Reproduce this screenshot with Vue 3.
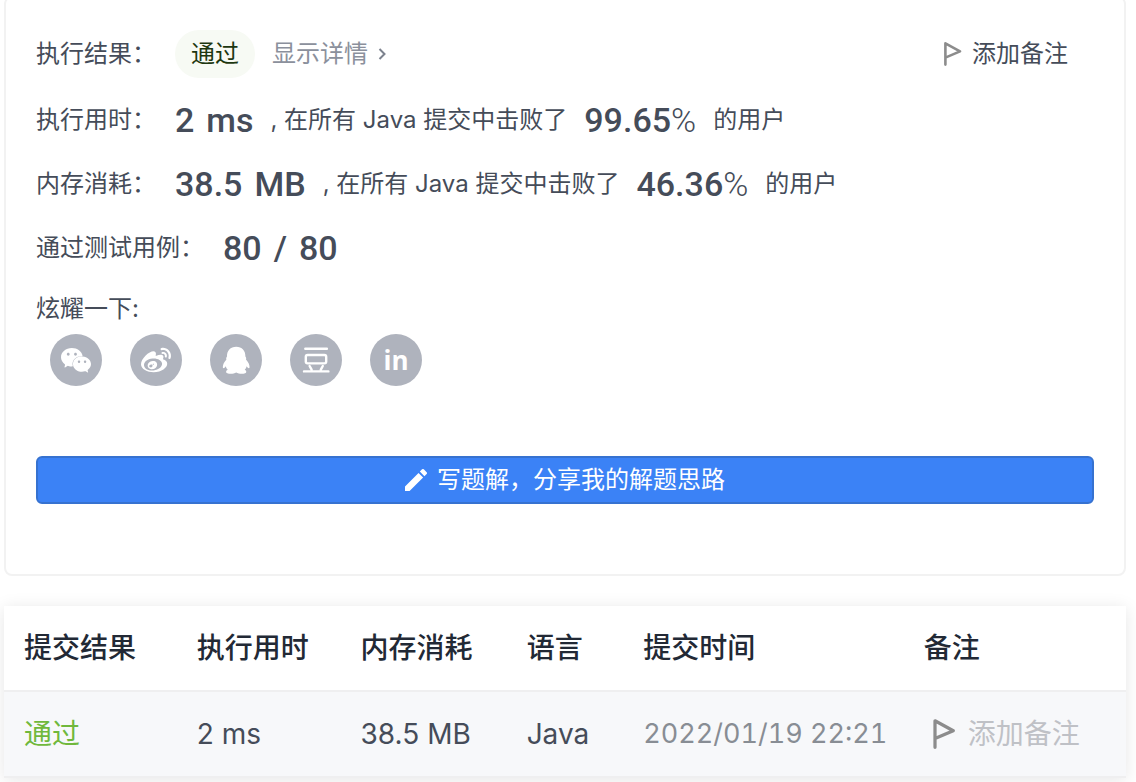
<script setup>
import { ref } from "vue";

const stats = [
  { label: "执行用时：", value: "2", unit: "ms", lang: "Java", percent: "99.65" },
  { label: "内存消耗：", value: "38.5", unit: "MB", lang: "Java", percent: "46.36" },
];

const columns = ["提交结果", "执行用时", "内存消耗", "语言", "提交时间", "备注"];

const submissions = ref([
  { id: 1, status: "通过", time: "2 ms", memory: "38.5 MB", lang: "Java", date: "2022/01/19 22:21" },
]);
</script>

<template>
  <main class="page">
    <section class="card">
      <div class="row row-result">
        <span class="label">执行结果：</span>
        <span class="badge">通过</span>
        <a href="#" class="detail">
          显示详情
          <svg class="chevron" viewBox="0 0 8 12" aria-hidden="true">
            <path d="M1.5 1 6.5 6 1.5 11" />
          </svg>
        </a>
        <button type="button" class="note">
          <svg class="flag" viewBox="0 0 18 24" aria-hidden="true">
            <path d="M1.4 22.6V1.4L16 9.4 1.4 15.6" />
          </svg>
          添加备注
        </button>
      </div>

      <div v-for="stat in stats" :key="stat.label" class="row">
        <span class="label">{{ stat.label }}</span>
        <strong class="value amount"><span>{{ stat.value }}</span><span>{{ stat.unit }}</span></strong>
        <span class="text">, 在所有 {{ stat.lang }} 提交中击败了</span>
        <span class="value"><strong>{{ stat.percent }}</strong><span class="percent">%</span></span>
        <span class="text">的用户</span>
      </div>

      <div class="row">
        <span class="label">通过测试用例：</span>
        <strong class="value amount"><span>80</span><span>/</span><span>80</span></strong>
      </div>

      <p class="show-off">炫耀一下:</p>
      <div class="share">
        <button type="button" class="share-button" aria-label="微信">
          <svg viewBox="0 0 52 52">
            <path transform="translate(11 11.3) scale(1.25)" d="M8.691 2.188C3.891 2.188 0 5.476 0 9.53c0 2.212 1.17 4.203 3.002 5.55a.59.59 0 0 1 .213.665l-.39 1.48c-.019.07-.048.141-.048.213 0 .163.13.295.29.295a.326.326 0 0 0 .167-.054l1.903-1.114a.864.864 0 0 1 .717-.098 10.16 10.16 0 0 0 2.837.403c.276 0 .543-.027.811-.05-.857-2.578.157-4.972 1.932-6.446 1.703-1.415 3.882-1.98 5.853-1.838-.576-3.583-4.196-6.348-8.596-6.348zM5.785 5.991c.642 0 1.162.529 1.162 1.18a1.17 1.17 0 0 1-1.162 1.178A1.17 1.17 0 0 1 4.623 7.17c0-.651.52-1.18 1.162-1.18zm5.813 0c.642 0 1.162.529 1.162 1.18a1.17 1.17 0 0 1-1.162 1.178 1.17 1.17 0 0 1-1.162-1.178c0-.651.52-1.18 1.162-1.18zm5.34 2.867c-1.797-.052-3.746.512-5.28 1.786-1.72 1.428-2.687 3.72-1.78 6.22.942 2.453 3.666 4.229 6.884 4.229.826 0 1.622-.12 2.361-.336a.722.722 0 0 1 .598.082l1.584.926a.272.272 0 0 0 .14.047c.134 0 .24-.111.24-.247 0-.06-.023-.12-.038-.177l-.327-1.233a.582.582 0 0 1-.023-.156.49.49 0 0 1 .201-.398C23.024 18.48 24 16.82 24 14.98c0-3.21-2.931-5.837-6.656-6.088V8.89c-.135-.01-.27-.027-.407-.03zm-2.53 3.274c.535 0 .969.44.969.982a.976.976 0 0 1-.969.983.976.976 0 0 1-.969-.983c0-.542.434-.982.97-.982zm4.844 0c.535 0 .969.44.969.982a.976.976 0 0 1-.969.983.976.976 0 0 1-.969-.983c0-.542.434-.982.969-.982z" />
          </svg>
        </button>
        <button type="button" class="share-button" aria-label="微博">
          <svg viewBox="0 0 52 52">
            <path transform="translate(11 11) scale(1.25)" d="M10.098 20.323c-3.977.391-7.414-1.406-7.672-4.02-.259-2.609 2.759-5.047 6.74-5.441 3.979-.394 7.413 1.404 7.671 4.018.259 2.6-2.759 5.049-6.737 5.439l-.002.004zM9.05 17.219c-.384.616-1.208.884-1.829.602-.612-.279-.793-.991-.406-1.593.379-.595 1.176-.861 1.793-.601.622.263.82.972.442 1.592zm1.27-1.627c-.141.237-.449.353-.689.253-.236-.09-.313-.361-.177-.586.138-.227.436-.346.672-.24.239.09.315.36.18.601l.014-.028zm.176-2.719c-1.893-.493-4.033.45-4.857 2.118-.836 1.704-.026 3.591 1.886 4.21 1.983.64 4.318-.341 5.132-2.179.8-1.793-.201-3.642-2.161-4.149zm7.563-1.224c-.346-.105-.57-.18-.405-.615.375-.977.42-1.804 0-2.404-.781-1.112-2.915-1.053-5.364-.03 0 0-.766.331-.571-.271.376-1.217.315-2.224-.27-2.809-1.338-1.337-4.869.045-7.888 3.08C1.309 10.87 0 13.273 0 15.348c0 3.981 5.099 6.395 10.086 6.395 6.536 0 10.888-3.801 10.888-6.82 0-1.822-1.547-2.854-2.915-3.284v.01zm1.908-5.092c-.766-.856-1.908-1.187-2.96-.962-.436.09-.706.511-.616.932.09.42.511.691.932.602.511-.105 1.067.044 1.442.465.376.421.466.977.316 1.473-.136.406.089.856.51.992.405.119.857-.105.992-.512.33-1.021.12-2.178-.646-3.035l.03.045zm2.418-2.195c-1.576-1.757-3.905-2.419-6.054-1.968-.496.104-.812.587-.706 1.081.104.496.586.813 1.082.707 1.532-.331 3.185.15 4.296 1.383 1.112 1.246 1.429 2.943.947 4.416-.165.48.106 1.007.586 1.157.479.165.991-.104 1.157-.586.675-2.088.241-4.478-1.338-6.235l.03.045z" />
          </svg>
        </button>
        <button type="button" class="share-button" aria-label="QQ">
          <svg viewBox="0 0 52 52">
            <path d="M26.2 12.8c-5.8 0-9.4 4.1-9.2 9.7-.8.9-1 1.9-.6 3-2.6 2.9-3.9 5.9-3.5 8.3.5 1.1 1.9.1 2.8-1.5.4 1.4 1 2.5 2 3.4-2 .7-2.1 3-.4 3.6 2.8.9 6.6.6 8.9-.9 2.3 1.5 6.1 1.8 8.9.9 1.7-.6 1.6-2.9-.4-3.6 1-.9 1.6-2 2-3.4.9 1.6 2.3 2.6 2.8 1.5.4-2.4-.9-5.4-3.5-8.3.4-1.1.2-2.1-.6-3 .2-5.6-3.4-9.7-9.2-9.7z" />
          </svg>
        </button>
        <button type="button" class="share-button" aria-label="豆瓣">
          <svg class="lines" viewBox="0 0 52 52">
            <path d="M15.3 14.8h21.6M14 37.4h24.4M19.6 32l2 3.6M32.8 32l-2 3.6" />
            <rect x="15.8" y="21" width="20.4" height="8.4" rx="1.8" />
          </svg>
        </button>
        <button type="button" class="share-button" aria-label="LinkedIn">in</button>
      </div>

      <button type="button" class="write">
        <svg class="pencil" viewBox="3 3 18 18" aria-hidden="true">
          <path d="M3 17.25V21h3.75L17.81 9.94l-3.75-3.75L3 17.25zM20.71 7.04a.996.996 0 0 0 0-1.41l-2.34-2.34a.996.996 0 0 0-1.41 0l-1.83 1.83 3.75 3.75 1.83-1.83z" />
        </svg>
        写题解，分享我的解题思路
      </button>
    </section>

    <table class="submissions">
      <colgroup>
        <col class="col-status" />
        <col class="col-time" />
        <col class="col-memory" />
        <col class="col-lang" />
        <col class="col-date" />
        <col class="col-note" />
      </colgroup>
      <thead>
        <tr>
          <th v-for="column in columns" :key="column">{{ column }}</th>
        </tr>
      </thead>
      <tbody>
        <tr v-for="item in submissions" :key="item.id">
          <td><a href="#" class="status">{{ item.status }}</a></td>
          <td>{{ item.time }}</td>
          <td>{{ item.memory }}</td>
          <td>{{ item.lang }}</td>
          <td class="date">{{ item.date }}</td>
          <td>
            <button type="button" class="note note-light">
              <svg class="flag" viewBox="0 0 18 24" aria-hidden="true">
                <path d="M1.4 22.6V1.4L16 9.4 1.4 15.6" />
              </svg>
              添加备注
            </button>
          </td>
        </tr>
      </tbody>
    </table>
  </main>
</template>

<style>
body {
  background: #fff;
  overflow: hidden;
}
</style>

<style scoped>
.page {
  padding: 0 10px 8px 4px;
  color: #454c59;
  font-family: Inter, "Noto Sans CJK SC", sans-serif;
  font-size: 24px;
}

button {
  padding: 0;
  border: none;
  background: none;
  color: inherit;
  font: inherit;
  cursor: pointer;
}

a {
  text-decoration: none;
}

.card {
  margin-top: -4px;
  padding: 24px 30px 70px;
  border: 2px solid #f2f2f2;
  border-radius: 8px;
}

.row {
  display: flex;
  align-items: center;
  gap: 17px;
  height: 64px;
  line-height: 64px;
  white-space: nowrap;
}

.row-result {
  margin-bottom: 2px;
}

.label {
  margin-right: 2px;
}

.badge {
  padding: 0 16px;
  border-radius: 24px;
  background: #f7faf4;
  color: #1d3710;
  line-height: 48px;
}

.detail {
  display: flex;
  align-items: center;
  gap: 10px;
  color: #8b909c;
}

.chevron {
  width: 8px;
  height: 12px;
  fill: none;
  stroke: #7c828e;
  stroke-width: 2;
}

.note {
  display: flex;
  align-items: center;
  gap: 10px;
  margin: 0 26px 0 auto;
}

.flag {
  width: 18px;
  height: 24px;
  fill: none;
  stroke: #8c8c8c;
  stroke-width: 2.6;
  stroke-linecap: round;
  stroke-linejoin: round;
}

.value {
  font-family: Roboto, sans-serif;
  font-size: 34px;
  font-weight: 500;
}

.value strong {
  font-weight: 500;
}

.percent {
  font-weight: 300;
}

.amount {
  display: flex;
  gap: 12px;
}

.show-off {
  height: 54px;
  margin: 0;
  line-height: 58px;
}

.share {
  display: flex;
  gap: 28px;
  padding: 0 14px;
}

.share-button {
  width: 52px;
  height: 52px;
  border-radius: 50%;
  background: #afb3bd;
  color: #fff;
  font: 700 26px/52px "Open Sans", sans-serif;
}

.share-button svg {
  display: block;
  fill: #fff;
}

.share-button .lines {
  fill: none;
  stroke: #fff;
  stroke-width: 2.4;
  stroke-linecap: round;
}

.write {
  display: flex;
  align-items: center;
  justify-content: center;
  gap: 10px;
  width: 100%;
  height: 48px;
  margin-top: 70px;
  border: 2px solid #3672d0;
  border-radius: 6px;
  background: #3b82f6;
  color: #fff;
  line-height: 44px;
}

.pencil {
  width: 22px;
  height: 22px;
  fill: #fff;
}

.submissions {
  width: 100%;
  margin-top: 30px;
  border-collapse: separate;
  border-spacing: 0;
  table-layout: fixed;
  box-shadow: 0 2px 16px rgba(0, 0, 0, 0.1);
  font-size: 28px;
  line-height: 42px;
}

.col-status {
  width: 15.4%;
}

.col-time {
  width: 14.6%;
}

.col-memory {
  width: 14.8%;
}

.col-lang {
  width: 10.4%;
}

.col-date {
  width: 25%;
}

th,
td {
  height: 84px;
  padding: 0 0 0 20px;
  border-bottom: 2px solid #efeff0;
  text-align: left;
  white-space: nowrap;
}

th {
  color: #222935;
  font-weight: 500;
}

td {
  background: #f7f8fa;
}

.status {
  color: #70b83c;
}

.date {
  color: #888d94;
  font-size: 27px;
  font-variant-numeric: tabular-nums;
}

.note-light {
  gap: 12px;
  margin: 0 0 0 9px;
  color: #bfc1c6;
}

.note-light .flag {
  width: 23px;
  height: 30px;
}
</style>
